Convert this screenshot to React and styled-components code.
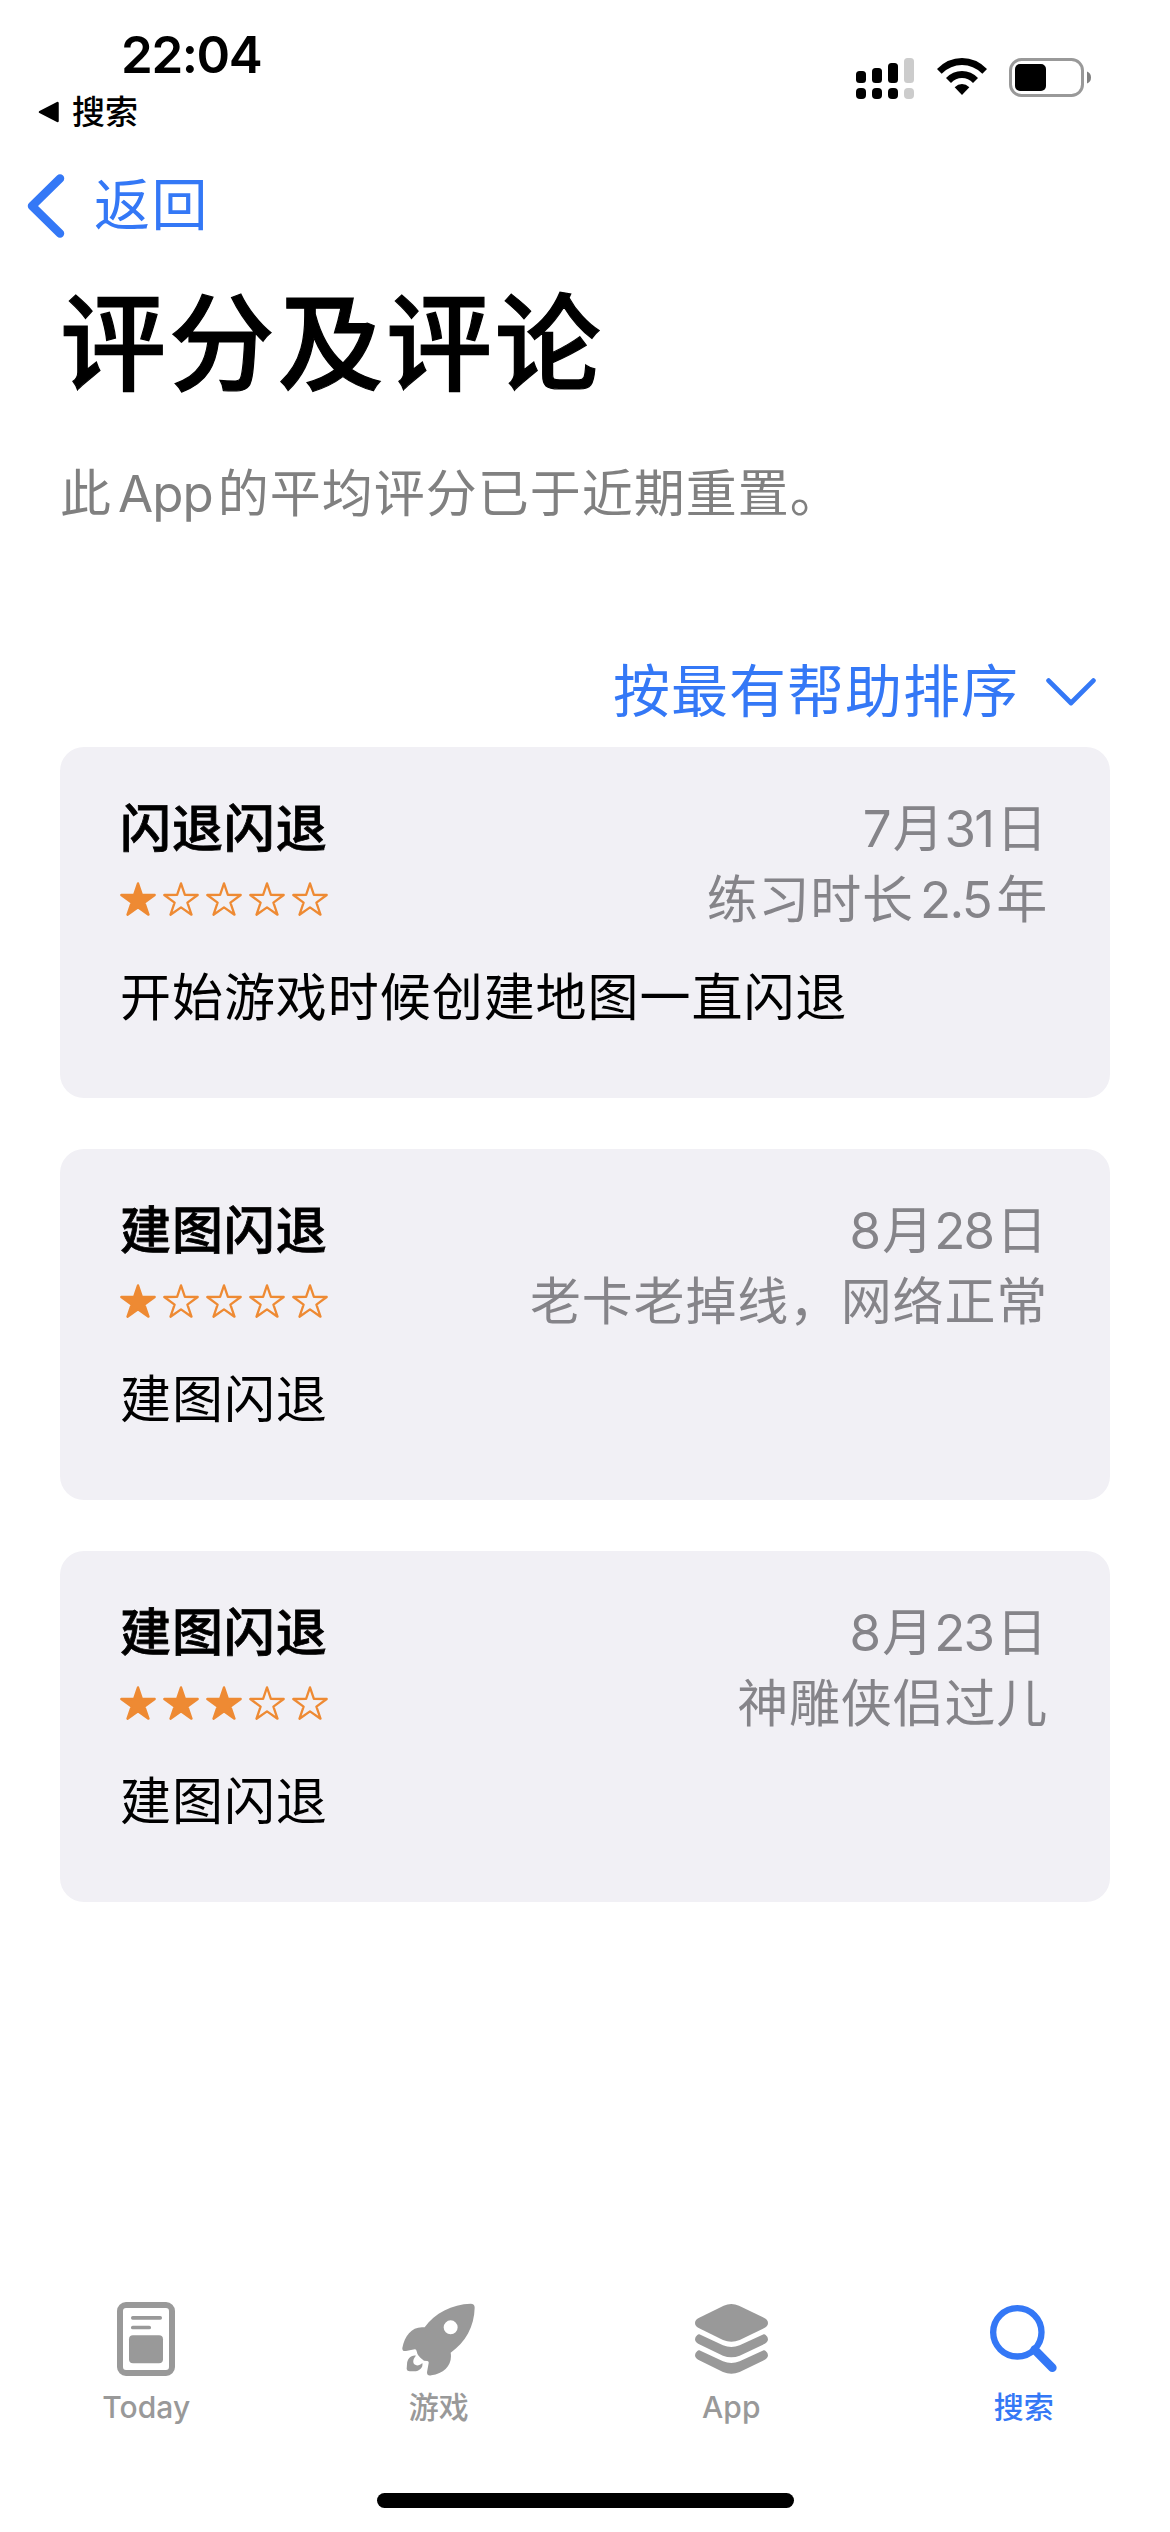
import React from "react";
import styled, { createGlobalStyle } from "styled-components";

const reviews = [
  {
    title: "闪退闪退",
    stars: 1,
    date: ["7", "月", "31", "日"],
    author: ["练习时长", "2.5", "年"],
    body: "开始游戏时候创建地图一直闪退",
  },
  {
    title: "建图闪退",
    stars: 1,
    date: ["8", "月", "28", "日"],
    author: ["老卡老掉线，网络正常"],
    body: "建图闪退",
  },
  {
    title: "建图闪退",
    stars: 3,
    date: ["8", "月", "23", "日"],
    author: ["神雕侠侣过儿"],
    body: "建图闪退",
  },
];

// Latin runs can get a little air next to the Chinese characters
const Mixed = ({ parts, gap, tracking = "-1px" }) =>
  parts.map((part, i) =>
    /^[\w.]+$/.test(part) ? (
      <Latin key={i} $gap={gap} $tracking={tracking}>
        {part}
      </Latin>
    ) : (
      <span key={i}>{part}</span>
    )
  );

const Star = ({ filled }) => (
  <svg width="36" height="34" viewBox="0 0 36 34">
    <path
      d="M18 1.4 L21.9 12.9 L34.7 13 L24.4 20.6 L28.5 32.7 L18 25.4 L7.5 32.7 L11.6 20.6 L1.3 13 L14.1 12.9 Z"
      fill={filled ? "#ee8a33" : "none"}
      stroke="#ee8a33"
      strokeWidth="2.3"
      strokeLinejoin="round"
    />
  </svg>
);

const Signal = () => (
  <svg width="58" height="42" viewBox="0 0 58 42">
    <rect x="0" y="13" width="10" height="12" rx="3.5" />
    <rect x="16" y="10" width="10" height="15" rx="3.5" />
    <rect x="32" y="5" width="10" height="20" rx="3.5" />
    <rect x="48" y="0" width="10" height="25" rx="3.5" fill="#ccc" />
    <rect x="0" y="30" width="10" height="11" rx="4" />
    <rect x="16" y="30" width="10" height="11" rx="4" />
    <rect x="32" y="30" width="10" height="11" rx="4" />
    <rect x="48" y="30" width="10" height="11" rx="4" fill="#ccc" />
  </svg>
);

const Wifi = () => (
  <svg width="50" height="37" viewBox="0 0 150 111">
    <path d="M0 33 Q32 0 75 0 Q118 0 150 33 L136 47 Q109 21 75 21 Q41 21 14 47 Z" />
    <path d="M27 60 Q47 39 75 39 Q103 39 123 60 L108 75 Q94 60 75 60 Q56 60 42 75 Z" />
    <path d="M53 88 Q63 78 75 78 Q87 78 97 88 L75 111 Z" />
  </svg>
);

const Battery = () => (
  <svg width="82" height="40" viewBox="0 0 82 40">
    <rect
      x="1.5"
      y="1.5"
      width="72"
      height="36"
      rx="11"
      fill="none"
      stroke="#999"
      strokeWidth="3"
    />
    <rect x="6" y="6" width="31" height="27" rx="5" />
    <path d="M78 13.5 Q82 15 82 19.5 Q82 24 78 25.5 Z" fill="#808080" />
  </svg>
);

const TodayIcon = () => (
  <svg width="58" height="74" viewBox="0 0 174 222" fill="#999">
    <rect
      x="9"
      y="9"
      width="156"
      height="204"
      rx="18"
      fill="none"
      stroke="#999"
      strokeWidth="18"
    />
    <rect x="42" y="42" width="93" height="11" rx="5" />
    <rect x="42" y="71" width="60" height="11" rx="5" />
    <rect x="36" y="100" width="102" height="84" rx="12" />
  </svg>
);

const GamesIcon = () => (
  <svg width="73" height="73" viewBox="0 0 219 219" fill="#999">
    <path
      fillRule="evenodd"
      d="M218 14 Q218 2 206 2 C150 4 98 30 68 73 C32 68 8 96 1 135 Q0 146 12 144 L38 139 Q43 138 44 145 Q46 160 66 173 L76 174 Q81 175 80 180 L75 208 Q75 220 88 217 C128 211 152 185 146 149 C190 118 217 70 218 14 Z M167 73 A21 21 0 1 0 125 73 A21 21 0 1 0 167 73 Z"
    />
    <path d="M42 158 C26 156 16 167 15 184 L14 198 Q15 205 23 205 L36 205 C53 205 64 193 61 180 C54 187 44 190 37 184 C31 177 34 166 42 158 Z" />
  </svg>
);

const AppsIcon = () => (
  <svg width="73" height="70" viewBox="0 0 219 210" fill="#999">
    <path d="M86 5 Q109 -5 132 5 L208 42 Q219 48 219 57 Q219 66 208 72 L134 108 Q109 119 84 108 L11 72 Q0 66 0 57 Q0 48 11 42 Z" />
    <path d="M13 91 L84 124 Q109 134 134 124 L206 91 Q209 90 212 93 Q219 98 219 106 Q219 114 208 120 L134 155 Q109 165 84 155 L11 120 Q0 114 0 106 Q0 98 7 93 Q10 90 13 91 Z" />
    <path d="M13 139 L84 172 Q109 182 134 172 L206 139 Q209 138 212 141 Q219 146 219 154 Q219 162 208 168 L134 204 Q109 215 84 204 L11 168 Q0 162 0 154 Q0 146 7 141 Q10 138 13 139 Z" />
  </svg>
);

const SearchIcon = () => (
  <svg width="67" height="68" viewBox="0 0 201 204" fill="none" stroke="#3478f6">
    <circle cx="82" cy="82" r="72.5" strokeWidth="19" />
    <path d="M134 134 L187 188" strokeWidth="26" strokeLinecap="round" />
  </svg>
);

const tabs = [
  { label: "Today", icon: <TodayIcon /> },
  { label: "游戏", icon: <GamesIcon /> },
  { label: "App", icon: <AppsIcon /> },
  { label: "搜索", icon: <SearchIcon />, active: true },
];

const Review = ({ title, stars, date, author, body }) => (
  <Card>
    <CardHead>
      <div>
        <ReviewTitle>{title}</ReviewTitle>
        <Stars>
          {[1, 2, 3, 4, 5].map((n) => (
            <Star key={n} filled={n <= stars} />
          ))}
        </Stars>
      </div>
      <Meta>
        <MetaLine>
          <Mixed parts={date} gap="0 3px 0 0" tracking="-1.8px" />
        </MetaLine>
        <MetaLine>
          <Mixed parts={author} gap="0 5px 0 6px" tracking="-1.6px" />
        </MetaLine>
      </Meta>
    </CardHead>
    <ReviewBody>{body}</ReviewBody>
  </Card>
);

const App = () => {
  return (
    <>
      <GlobalStyle />
      <Screen>
        <StatusBar>
          <StatusLeft>
            <Time>22:04</Time>
            <Crumb>
              <svg width="22" height="22" viewBox="0 0 22 22">
                <path
                  d="M2 11 L19.5 2 L19.5 20 Z"
                  stroke="#000"
                  strokeWidth="2.5"
                  strokeLinejoin="round"
                />
              </svg>
              搜索
            </Crumb>
          </StatusLeft>
          <StatusRight>
            <Signal />
            <Wifi />
            <Battery />
          </StatusRight>
        </StatusBar>
        <BackButton>
          <svg width="38" height="64" viewBox="0 0 38 64">
            <path
              d="M33 4.5 L5 32 L33 59.5"
              fill="none"
              stroke="#3478f6"
              strokeWidth="8.5"
              strokeLinecap="round"
              strokeLinejoin="round"
            />
          </svg>
          返回
        </BackButton>
        <Content>
          <Heading>评分及评论</Heading>
          <Note>
            <Mixed
              parts={["此", "App", "的平均评分已于近期重置。"]}
              gap="0 5px 0 6px"
            />
          </Note>
          <SortButton>
            按最有帮助排序
            <svg width="50" height="28" viewBox="0 0 50 28">
              <path
                d="M2.6 2.6 L25 25 L47.4 2.6"
                fill="none"
                stroke="#3478f6"
                strokeWidth="4.8"
                strokeLinecap="round"
                strokeLinejoin="round"
              />
            </svg>
          </SortButton>
          <ReviewList>
            {reviews.map((review, i) => (
              <Review key={i} {...review} />
            ))}
          </ReviewList>
        </Content>
        <TabBar>
          {tabs.map(({ label, icon, active }) => (
            <Tab key={label} $active={active}>
              <TabIcon>{icon}</TabIcon>
              <TabLabel>{label}</TabLabel>
            </Tab>
          ))}
        </TabBar>
        <HomeIndicator />
      </Screen>
    </>
  );
};

export default App;

// STYLING SECTION:

const GlobalStyle = createGlobalStyle`
  * {
    box-sizing: border-box;
  }

  body {
    margin: 0;
    background: #fff;
    font-family: Inter, "Noto Sans CJK SC", sans-serif;
  }

  svg {
    display: block;
    flex-shrink: 0;
  }
`;

const Screen = styled.div`
  display: flex;
  flex-direction: column;
  width: 1170px;
  height: 2532px;
  background: #fff;
  color: #000;
  overflow: hidden;
`;

const StatusBar = styled.header`
  display: flex;
  justify-content: space-between;
  height: 140px;
  padding: 25px 79px 0 38px;
`;

const StatusLeft = styled.div`
  display: flex;
  flex-direction: column;
`;

const Time = styled.div`
  height: 60px;
  padding-left: 83px;
  font-size: 51px;
  font-weight: 600;
  letter-spacing: -1.4px;
  line-height: 60px;
`;

const Crumb = styled.div`
  display: flex;
  align-items: center;
  gap: 12px;
  height: 54px;
  font-size: 33px;
  font-weight: 500;
  line-height: 54px;
`;

const StatusRight = styled.div`
  display: flex;
  align-items: flex-start;
  gap: 22.5px;
  padding-top: 33px;
`;

const BackButton = styled.div`
  display: flex;
  align-items: center;
  gap: 29px;
  height: 131px;
  padding-left: 27px;
  color: #3478f6;
  font-size: 56px;
  letter-spacing: 1.5px;
  line-height: 131px;
`;

const Content = styled.main`
  display: flex;
  flex: 1;
  flex-direction: column;
  padding: 0 60px;
`;

const Heading = styled.h1`
  height: 146px;
  margin: 0;
  font-size: 106px;
  font-weight: 500;
  letter-spacing: 2.7px;
  line-height: 146px;
  -webkit-text-stroke: 1.2px #000;
`;

const Note = styled.p`
  height: 70px;
  margin: 42px 0 0;
  color: #808080;
  font-size: 51px;
  letter-spacing: 1px;
  line-height: 70px;
`;

const SortButton = styled.div`
  display: flex;
  align-items: center;
  justify-content: flex-end;
  gap: 27px;
  height: 110px;
  margin-top: 108px;
  padding-right: 14px;
  color: #3478f6;
  font-size: 57px;
  letter-spacing: 1px;
  line-height: 110px;
`;

const ReviewList = styled.section`
  display: flex;
  flex-direction: column;
  gap: 51px;
`;

const Card = styled.article`
  height: 351px;
  padding: 46px 62px 0 60px;
  background: #f1f0f5;
  border-radius: 24px;
`;

const CardHead = styled.div`
  display: flex;
  justify-content: space-between;
  height: 142px;
`;

const ReviewTitle = styled.h2`
  height: 71px;
  margin: 0;
  font-size: 51px;
  font-weight: 500;
  letter-spacing: 0.9px;
  line-height: 71px;
  -webkit-text-stroke: 0.8px #000;
`;

const Stars = styled.div`
  display: flex;
  gap: 7px;
  padding-top: 18px;
`;

const Meta = styled.div`
  color: #858489;
  font-size: 51px;
  letter-spacing: 0.8px;
  text-align: right;
`;

const MetaLine = styled.div`
  height: 71px;
  line-height: 71px;
  white-space: nowrap;
`;

const Latin = styled.span`
  margin: ${(props) => props.$gap};
  letter-spacing: ${(props) => props.$tracking};
`;

const ReviewBody = styled.p`
  height: 71px;
  margin: 27px 0 0;
  font-size: 51px;
  letter-spacing: 0.95px;
  line-height: 71px;
`;

const TabBar = styled.nav`
  display: grid;
  grid-template-columns: repeat(4, 1fr);
  height: 193px;
`;

const Tab = styled.div`
  display: flex;
  flex-direction: column;
  align-items: center;
  color: ${(props) => (props.$active ? "#3478f6" : "#999")};
`;

const TabIcon = styled.div`
  display: flex;
  align-items: center;
  height: 78px;
`;

const TabLabel = styled.div`
  height: 40px;
  margin-top: 9px;
  font-size: 30px;
  font-weight: 500;
  letter-spacing: 0.1px;
  line-height: 40px;
`;

const HomeIndicator = styled.div`
  align-self: center;
  width: 417px;
  height: 15px;
  margin-bottom: 24px;
  background: #000;
  border-radius: 8px;
`;
